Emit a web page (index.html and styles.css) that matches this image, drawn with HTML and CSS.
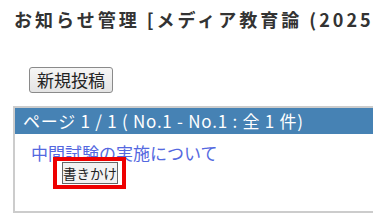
FILE: index.html
```html
<!DOCTYPE html>
<html lang="ja">
<head>
    <meta charset="UTF-8">
    <meta name="viewport" content="width=device-width, initial-scale=1.0">
    <title>お知らせ管理</title>
    <link rel="stylesheet" href="styles.css">
</head>
<body>
    <div class="pagina">
        <h1 class="titulo">お知らせ管理 [メディア教育論 (2025年度)]</h1>

        <div class="barra">
            <button class="botao">新規投稿</button>
        </div>

        <div class="painel">
            <div class="painel-topo">ページ 1 / 1 ( No.1 - No.1 : 全 1 件)</div>
            <div class="painel-corpo">
                <a class="aviso" href="#">中間試験の実施について</a>
                <div class="marca">
                    <span class="rascunho">書きかけ</span>
                </div>
            </div>
        </div>
    </div>
</body>
</html>
```

FILE: styles.css
```css
html, body {
    margin: 0;
    overflow: hidden;
    background: #ffffff;
}

body {
    font-family: "Noto Sans CJK JP", "Noto Sans", sans-serif;
    color: #333333;
}

.pagina {
    padding-left: 13px;
}

.titulo {
    margin: 0;
    padding: 6px 0 0 1px;
    font-size: 18px;
    line-height: 26px;
    font-weight: bold;
    letter-spacing: 3px;
    white-space: nowrap;
    color: #333333;
}

.barra {
    margin-top: 35px;
    padding-left: 16px;
}

.botao {
    font-family: inherit;
    font-size: 17px;
    line-height: 22px;
    padding: 1px 7px;
    color: #222222;
    background: linear-gradient(to bottom, #f6f6f6, #e4e4e4);
    border: 1px solid #8a8a8a;
    border-radius: 3px;
    display: block;
}

.painel {
    margin-top: 13px;
    margin-right: -20px;
    border: 2px solid #cccccc;
}

.painel-topo {
    background-color: #4682b4;
    color: #ffffff;
    font-size: 17px;
    height: 26px;
    line-height: 26px;
    padding-left: 8px;
    letter-spacing: 0.75px;
    white-space: nowrap;
}

.painel-corpo {
    height: 69px;
    padding: 8px 0 0 16px;
}

.aviso {
    display: block;
    font-size: 17px;
    line-height: 22px;
    color: #5468e0;
    text-decoration: none;
}

.marca {
    position: relative;
    width: fit-content;
    margin: -7px 0 0 22px;
    padding: 1px 4px 1px 5px;
    border: 4px solid #ee0000;
    background: #ffffff;
}

.rascunho {
    display: block;
    font-size: 13.5px;
    line-height: 20px;
    padding: 0;
    color: #222222;
    background: #f2f2f2;
    border: 1px solid #666666;
}
```
